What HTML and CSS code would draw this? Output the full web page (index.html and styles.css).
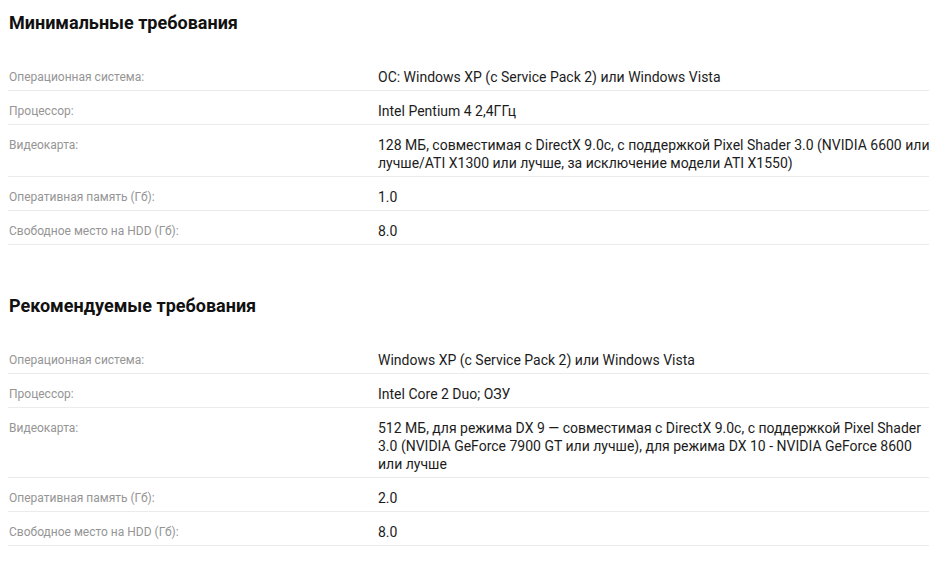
FILE: index.html
```html
<!DOCTYPE html>
<html lang="ru">
<head>
<meta charset="utf-8">
<title>Системные требования</title>
<link rel="stylesheet" href="styles.css">
</head>
<body>
<div class="page">
  <section class="req">
    <h2 class="req-title">Минимальные требования</h2>
    <div class="row"><div class="label">Операционная система:</div><div class="value">ОС: Windows XP (с Service Pack 2) или Windows Vista</div></div>
    <div class="row"><div class="label">Процессор:</div><div class="value">Intel Pentium 4 2,4ГГц</div></div>
    <div class="row"><div class="label">Видеокарта:</div><div class="value">128 МБ, совместимая с DirectX 9.0c, с поддержкой Pixel Shader 3.0 (NVIDIA 6600 или лучше/ATI X1300 или лучше, за исключение модели ATI X1550)</div></div>
    <div class="row"><div class="label">Оперативная память (Гб):</div><div class="value">1.0</div></div>
    <div class="row"><div class="label">Свободное место на HDD (Гб):</div><div class="value">8.0</div></div>
  </section>
  <section class="req">
    <h2 class="req-title">Рекомендуемые требования</h2>
    <div class="row"><div class="label">Операционная система:</div><div class="value">Windows XP (с Service Pack 2) или Windows Vista</div></div>
    <div class="row"><div class="label">Процессор:</div><div class="value">Intel Core 2 Duo; ОЗУ</div></div>
    <div class="row"><div class="label">Видеокарта:</div><div class="value">512 МБ, для режима DX 9 — совместимая с DirectX 9.0c, с поддержкой Pixel Shader 3.0 (NVIDIA GeForce 7900 GT или лучше), для режима DX 10 - NVIDIA GeForce 8600 или лучше</div></div>
    <div class="row"><div class="label">Оперативная память (Гб):</div><div class="value">2.0</div></div>
    <div class="row"><div class="label">Свободное место на HDD (Гб):</div><div class="value">8.0</div></div>
  </section>
</div>
</body>
</html>
```
FILE: styles.css
```css
html, body {
  margin: 0;
  padding: 0;
  background: #ffffff;
}
body {
  font-family: Roboto, "Noto Sans", Arial, sans-serif;
  color: #1a1a1a;
}
.page {
  width: 921px;
  padding: 11px 0 0 8px;
}
.req {
  margin: 0 0 49px 0;
}
.req:last-child {
  margin-bottom: 0;
}
.req-title {
  margin: 0 0 22px 1px;
  font-size: 18px;
  line-height: 24px;
  font-weight: 700;
  color: #111111;
}
.row {
  display: flex;
  border-bottom: 1px solid #ebebeb;
  padding: 11px 0 4px 0;
}
.label {
  width: 369px;
  flex: none;
  padding-left: 1px;
  font-size: 12px;
  line-height: 18px;
  color: #959595;
}
.value {
  flex: 1;
  margin-right: -6px;
  font-size: 14px;
  line-height: 18px;
  color: #1c1c1c;
}
```
